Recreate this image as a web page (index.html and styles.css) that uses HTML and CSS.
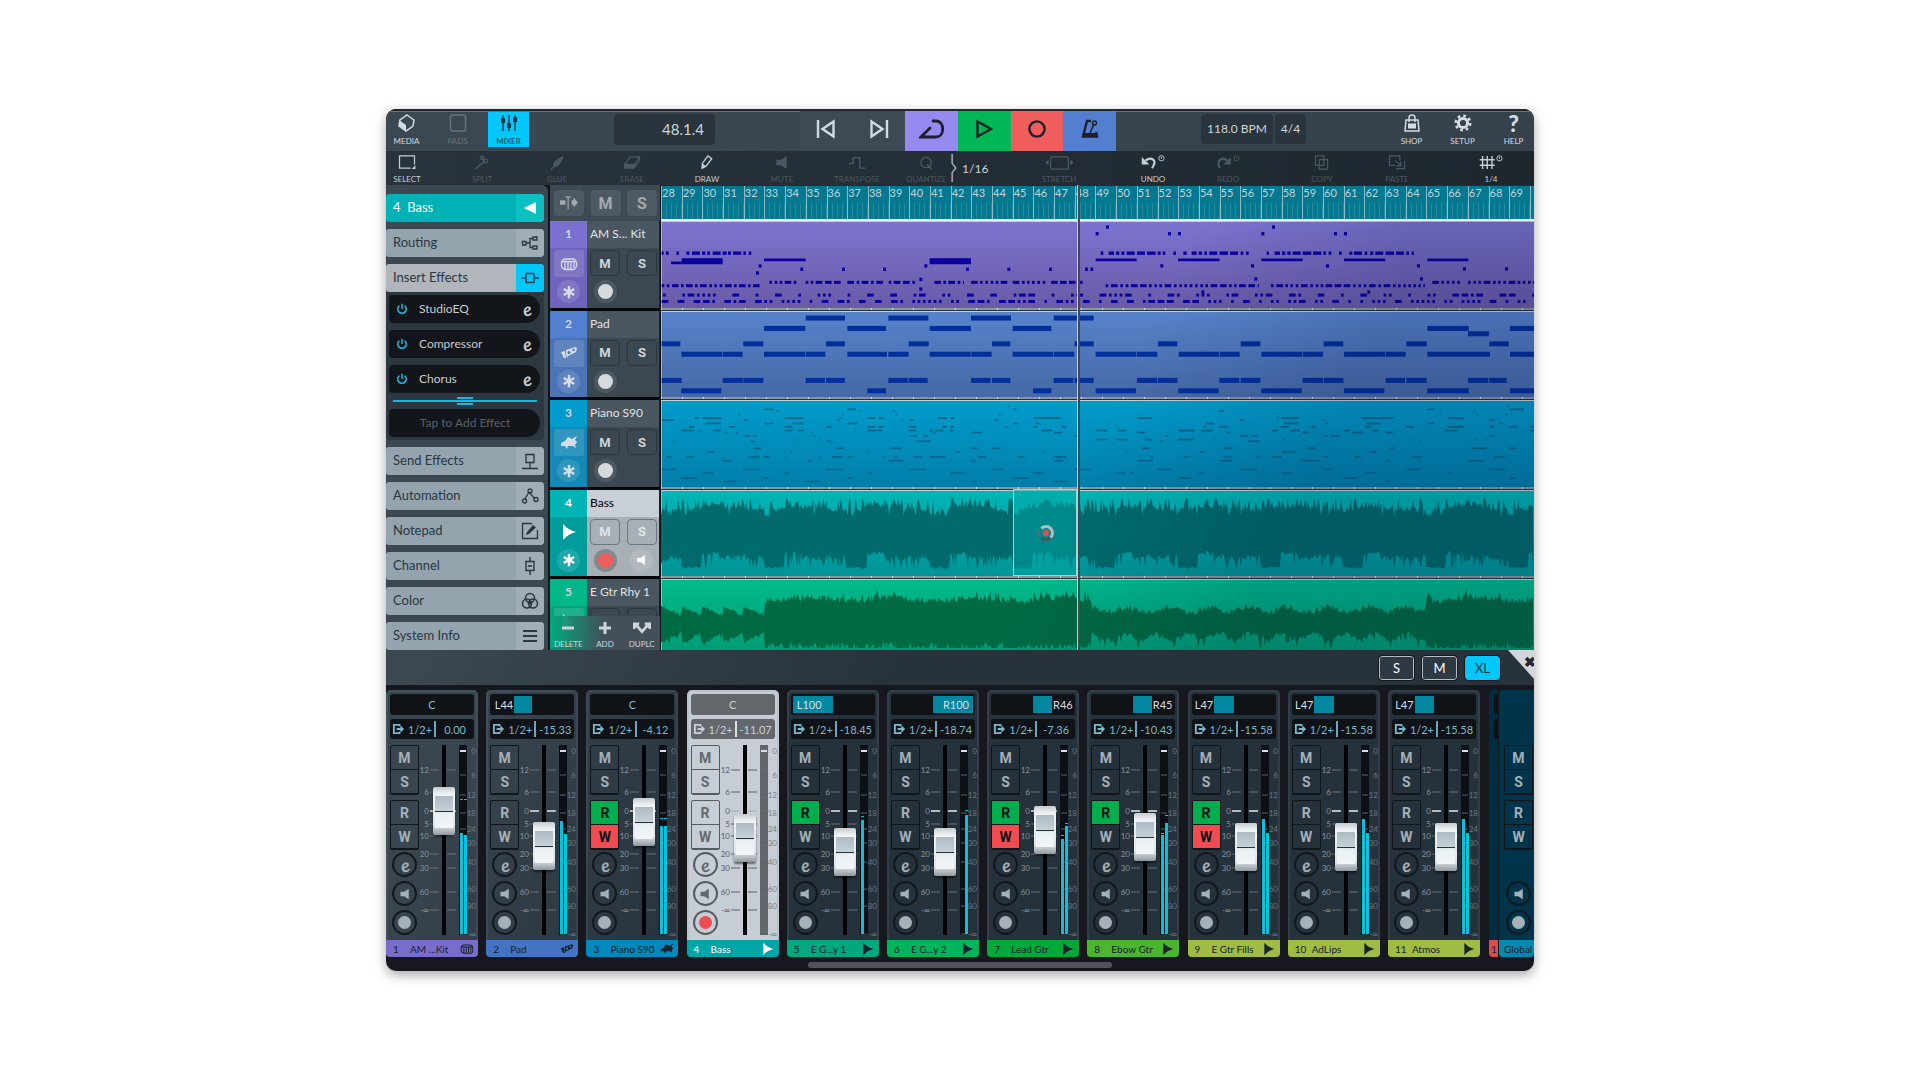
FILE: index.html
```html
<!DOCTYPE html>
<html lang="en">
<head>
  <meta charset="UTF-8" />
  <meta name="viewport" content="width=device-width, initial-scale=1.0" />
  <title>Project - Mixer</title>
  <link rel="stylesheet" href="styles.css">
</head>
<body>
  <!-- Icon sprite -->
  <svg class="sprite" aria-hidden="true">
    <symbol id="i-media" viewBox="0 0 18 18"><path d="M9 1 16 6 15 12 8 17 1 12 2 6Z" fill="none" stroke="currentColor" stroke-width="1.5"/><path d="M1 6 8 11V17L1 12Z" fill="currentColor"/></symbol>
    <symbol id="i-pads" viewBox="0 0 18 18"><rect x="1.5" y="1" width="15" height="16" rx="2" fill="none" stroke="currentColor" stroke-width="1.5"/></symbol>
    <symbol id="i-mixer" viewBox="0 0 18 18"><path d="M3 1V17M9 1V17M15 1V17" stroke="currentColor" stroke-width="1.4"/><path d="M1 4h4v5H1zM7 9h4v5H7zM13 3h4v5h-4z" fill="currentColor"/></symbol>
    <symbol id="i-prev" viewBox="0 0 20 20"><path d="M2 1V19M17.500 2.500V17.500L6.500 10Z" fill="none" stroke="currentColor" stroke-width="2.4"/></symbol>
    <symbol id="i-next" viewBox="0 0 20 20"><path d="M18 1V19M2.500 2.500V17.500L13.500 10Z" fill="none" stroke="currentColor" stroke-width="2.400"/></symbol>
    <symbol id="i-cycle" viewBox="0 0 26 20"><path d="M14 2H17C26 2 26 18 17 18H2L11 9" fill="none" stroke="currentColor" stroke-width="2.800" stroke-linecap="round"/></symbol>
    <symbol id="i-playline" viewBox="0 0 20 20"><path d="M3.500 2.500V17.500L17 10Z" fill="none" stroke="currentColor" stroke-width="2.400"/></symbol>
    <symbol id="i-rec" viewBox="0 0 20 20"><circle cx="10" cy="10" r="7.600" fill="none" stroke="currentColor" stroke-width="2.400"/></symbol>
    <symbol id="i-metro" viewBox="0 0 20 20"><path d="M11 2H7L3 17.500H17L16 13" fill="none" stroke="currentColor" stroke-width="2.400"/><path d="M4 14H17V18H3Z" fill="currentColor"/><path d="M10 14 14 5" stroke="currentColor" stroke-width="1.600"/><circle cx="14.500" cy="4" r="2" fill="none" stroke="currentColor" stroke-width="1.400"/></symbol>
    <symbol id="i-shop" viewBox="0 0 18 18"><path d="M3 6H15L16 17H2ZM6 8V4C6 0 12 0 12 4V8" fill="none" stroke="currentColor" stroke-width="1.500"/><path d="M5 9.500H13V14.500H5Z" fill="currentColor"/></symbol>
    <symbol id="i-setup" viewBox="0 0 18 18"><circle cx="9" cy="9" r="4.600" fill="none" stroke="currentColor" stroke-width="3"/><circle cx="9" cy="9" r="7.200" fill="none" stroke="currentColor" stroke-width="2.600" stroke-dasharray="2.800 2.855"/></symbol>
    <symbol id="i-select" viewBox="0 0 18 16"><path d="M13 14H1V1H17V10" fill="none" stroke="currentColor" stroke-width="1.300"/><path d="M18 11V15H14Z" fill="currentColor"/></symbol>
    <symbol id="i-split" viewBox="0 0 18 16"><path d="M2 15 11 7M9 2 12 8" stroke="currentColor" stroke-width="1.600"/><circle cx="9" cy="3" r="2" fill="none" stroke="currentColor" stroke-width="1.200"/><circle cx="13" cy="6.500" r="2.200" fill="none" stroke="currentColor" stroke-width="1.200"/></symbol>
    <symbol id="i-glue" viewBox="0 0 18 16"><path d="M2 15 5 12C3 8 10 3 16 1C15 6 11 13 6 13L3 16Z" fill="currentColor"/></symbol>
    <symbol id="i-erase" viewBox="0 0 18 16"><path d="M1 10 7 2H17L12 10ZM1 10V14H11L17 6V2M12 10 11 14" fill="none" stroke="currentColor" stroke-width="1.200"/><path d="M1 10H12L11 14H1Z" fill="currentColor"/></symbol>
    <symbol id="i-draw" viewBox="0 0 18 16"><path d="M4 14V9L10 1 14 4 8 12Z" fill="none" stroke="currentColor" stroke-width="1.500"/><path d="M4 9 8 12 3 15Z" fill="currentColor"/></symbol>
    <symbol id="i-speaker" viewBox="0 0 18 16"><path d="M3 5H8L14 1V15L8 11H3Z" fill="currentColor"/></symbol>
    <symbol id="i-transpose" viewBox="0 0 18 16"><path d="M0 9H5V3H12V14H18" fill="none" stroke="currentColor" stroke-width="1.500"/></symbol>
    <symbol id="i-quantize" viewBox="0 0 18 16"><path d="M9 2.500A5.500 5.500 0 1 0 9 13.500 5.500 5.500 0 1 0 9 2.500M10 10 15 15" fill="none" stroke="currentColor" stroke-width="1.500"/></symbol>
    <symbol id="i-stretch" viewBox="0 0 30 16"><rect x="6" y="2" width="19" height="13" rx="1" fill="none" stroke="currentColor" stroke-width="1.300"/><path d="M4 5V11L0 8ZM27 5V11L31 8Z" fill="currentColor"/></symbol>
    <symbol id="i-undo" viewBox="0 0 26 16"><path d="M5 6C10 2 19 4 12 14" fill="none" stroke="currentColor" stroke-width="2.400"/><path d="M1 2V10H9Z" fill="currentColor"/><circle cx="22" cy="3.500" r="2.800" fill="none" stroke="currentColor"/><path d="M22 2V4" stroke="currentColor"/></symbol>
    <symbol id="i-redo" viewBox="0 0 26 16"><path d="M12 6C8 2 0 4 4 14" fill="none" stroke="currentColor" stroke-width="2.400"/><path d="M16 2V10H8Z" fill="currentColor"/><circle cx="22" cy="3.500" r="2.800" fill="none" stroke="currentColor"/><path d="M22 2V4" stroke="currentColor"/></symbol>
    <symbol id="i-copy" viewBox="0 0 18 16"><path d="M2 1H11V11H2ZM6 5H15V15H6Z" fill="none" stroke="currentColor" stroke-width="1.300"/></symbol>
    <symbol id="i-paste" viewBox="0 0 18 16"><path d="M12 6V1H1V11H7M8 14.500H17V7M7 6 13 11M13 7V11.500H8" fill="none" stroke="currentColor" stroke-width="1.300"/></symbol>
    <symbol id="i-grid" viewBox="0 0 26 16"><path d="M4 1V15M9 1V15M14 1V15M1 5H17M1 11H17" stroke="currentColor" stroke-width="1.500"/><circle cx="22" cy="3.500" r="2.800" fill="none" stroke="currentColor"/><path d="M22 2V4" stroke="currentColor"/></symbol>
    <symbol id="i-tri-left" viewBox="0 0 18 18"><path d="M15 3V15L3 9Z" fill="currentColor"/></symbol>
    <symbol id="i-play" viewBox="0 0 18 18"><path d="M3 1V17Q8 11 16 9Q8 7 3 1Z" fill="currentColor"/></symbol>
    <symbol id="i-routing" viewBox="0 0 18 18"><path d="M1.500 7.500H5V11H1.500ZM12 3H16V6H12ZM12 12H16V15H12ZM5 9H9M12 4.500H9V13.500H12" fill="none" stroke="currentColor" stroke-width="1.300"/></symbol>
    <symbol id="i-insert" viewBox="0 0 18 18"><path d="M0 9H5M13 9H18M5 4.500H13V13.500H5Z" fill="none" stroke="currentColor" stroke-width="1.400"/></symbol>
    <symbol id="i-send" viewBox="0 0 18 18"><path d="M5 2.500H13V10.500H5ZM9 11V16M1 16.500H17" fill="none" stroke="currentColor" stroke-width="1.300"/></symbol>
    <symbol id="i-auto" viewBox="0 0 18 18"><path d="M4 12 8 5 14 12" fill="none" stroke="currentColor" stroke-width="1.300"/><g fill="none" stroke="currentColor" stroke-width="1.300"><circle cx="3.500" cy="14" r="2"/><circle cx="9" cy="4" r="2"/><circle cx="15" cy="12.500" r="2"/></g></symbol>
    <symbol id="i-note" viewBox="0 0 18 18"><path d="M11 1.500H1.500V16.500H16.500V8" fill="none" stroke="currentColor" stroke-width="1.300"/><path d="M5 13 6 10 12 3 15 5.500 8 12Z" fill="currentColor"/></symbol>
    <symbol id="i-channel" viewBox="0 0 18 18"><path d="M5 4.500H13V13.500H5ZM9 0V4M9 14V18M7 9H11" fill="none" stroke="currentColor" stroke-width="1.400"/></symbol>
    <symbol id="i-color" viewBox="0 0 18 18"><g fill="none" stroke="currentColor" stroke-width="1.500"><circle cx="9" cy="6" r="4.500"/><circle cx="6" cy="11.500" r="4.500"/><circle cx="12" cy="11.500" r="4.500"/></g><path d="M6 9H12L9 13Z" fill="currentColor"/></symbol>
    <symbol id="i-lines" viewBox="0 0 18 18"><path d="M2 4H16M2 9H16M2 14H16" stroke="currentColor" stroke-width="2"/></symbol>
    <symbol id="i-power" viewBox="0 0 14 14"><path d="M4 3A5 5 0 1 0 10 3M7 1V7" fill="none" stroke="currentColor" stroke-width="1.800"/></symbol>
    <symbol id="i-cursor" viewBox="0 0 20 16"><path d="M0 5H6V10H0ZM13 5H15V2L20 7.500 15 13V10H13Z" fill="currentColor"/><path d="M6 1.500H12M9 1V15" stroke="currentColor" stroke-width="1.200"/></symbol>
    <symbol id="i-drum" viewBox="0 0 18 18"><rect x="1.500" y="4" width="15" height="10.500" rx="4" fill="none" stroke="currentColor" stroke-width="1.300"/><path d="M2 6.500H16M5 7V14M8 7V14M11 7V14M14 7V13" stroke="currentColor" stroke-width="1.300"/></symbol>
    <symbol id="i-synth" viewBox="0 0 18 18"><path d="M1 8 5 7 6 14 4 14ZM6 6 15 3 17 4 16 8 8 12 7 14 6 10Z" fill="currentColor"/><circle cx="9" cy="8.500" r="1.500" fill="#47a"/><circle cx="13.500" cy="6" r="1.200" fill="#47a"/></symbol>
    <symbol id="i-piano" viewBox="0 0 18 18"><path d="M1 9 5 7 8 3 12 5 17 2 15 6 17 8 15 11 16 14 13 12 8 12 7 15 5 12 1 12Z" fill="currentColor"/></symbol>
    <symbol id="i-star" viewBox="0 0 16 16"><path d="M8 1V15M2 4.500 14 11.500M14 4.500 2 11.500" stroke="currentColor" stroke-width="2.800"/></symbol>
    <symbol id="i-minus" viewBox="0 0 14 14"><path d="M1 7H13" stroke="currentColor" stroke-width="3"/></symbol>
    <symbol id="i-plus" viewBox="0 0 14 14"><path d="M1 7H13M7 1V13" stroke="currentColor" stroke-width="3"/></symbol>
    <symbol id="i-dup" viewBox="0 0 20 14"><path d="M4 4 10 11 16 4" fill="none" stroke="currentColor" stroke-width="3"/><path d="M0 1H7V3L2 8H0ZM20 1H13V3L18 8H20Z" fill="currentColor"/></symbol>
    <symbol id="i-out" viewBox="0 0 14 12"><path d="M8 3V1.500H2V10.500H8V9" fill="none" stroke="currentColor" stroke-width="2"/><path d="M5 5H9V2L13 6 9 10V7H5Z" fill="currentColor"/></symbol>
  </svg>

  <main class="app">
    <header class="topbar">
      <nav class="group">
        <button class="menu-btn"><svg><use href="#i-media"/></svg>MEDIA</button>
        <button class="menu-btn off"><svg><use href="#i-pads"/></svg>PADS</button>
        <button class="menu-btn on"><svg><use href="#i-mixer"/></svg>MIXER</button>
      </nav>
      <div class="position">48.1.4</div>
      <div class="transport">
        <button aria-label="Previous"><svg><use href="#i-prev"/></svg></button>
        <button aria-label="Next"><svg><use href="#i-next"/></svg></button>
        <button class="cycle" aria-label="Cycle"><svg class="wide"><use href="#i-cycle"/></svg></button>
        <button class="play" aria-label="Play"><svg><use href="#i-playline"/></svg></button>
        <button class="record" aria-label="Record"><svg><use href="#i-rec"/></svg></button>
        <button class="metro" aria-label="Metronome"><svg><use href="#i-metro"/></svg></button>
      </div>
      <div class="tempo">
        <button class="bpm">118.0 BPM</button>
        <button class="sig">4/4</button>
      </div>
      <nav class="group">
        <button class="menu-btn"><svg><use href="#i-shop"/></svg>SHOP</button>
        <button class="menu-btn"><svg><use href="#i-setup"/></svg>SETUP</button>
        <button class="menu-btn"><b class="help">?</b>HELP</button>
      </nav>
    </header>

    <div class="tools">
      <div class="tool-group">
        <button class="tool active"><svg><use href="#i-select"/></svg>SELECT</button>
        <button class="tool"><svg><use href="#i-split"/></svg>SPLIT</button>
        <button class="tool"><svg><use href="#i-glue"/></svg>GLUE</button>
        <button class="tool"><svg><use href="#i-erase"/></svg>ERASE</button>
        <button class="tool active"><svg><use href="#i-draw"/></svg>DRAW</button>
        <button class="tool"><svg><use href="#i-speaker"/></svg>MUTE</button>
        <button class="tool"><svg><use href="#i-transpose"/></svg>TRANSPOSE</button>
      </div>
      <div class="quantize">
        <button class="tool"><svg><use href="#i-quantize"/></svg>QUANTIZE</button>
        <svg class="brace" viewBox="0 0 6 30"><path d="M1 0V10L5 15 1 20V30" fill="none" stroke="currentColor" stroke-width="1.500"/></svg>
        <span>1/16</span>
      </div>
      <div class="tool-group"><button class="tool"><svg class="wide"><use href="#i-stretch"/></svg>STRETCH</button></div>
      <div class="tool-group">
        <button class="tool active"><svg class="wide"><use href="#i-undo"/></svg>UNDO</button>
        <button class="tool"><svg class="wide"><use href="#i-redo"/></svg>REDO</button>
      </div>
      <div class="tool-group">
        <button class="tool"><svg><use href="#i-copy"/></svg>COPY</button>
        <button class="tool"><svg><use href="#i-paste"/></svg>PASTE</button>
      </div>
      <div class="tool-group"><button class="tool active"><svg class="wide"><use href="#i-grid"/></svg>1/4</button></div>
    </div>

    <section class="project">
      <aside class="inspector">
        <button class="panel track-title"><span>4&nbsp; Bass</span><i><svg><use href="#i-tri-left"/></svg></i></button>
        <button class="panel"><span>Routing</span><i><svg><use href="#i-routing"/></svg></i></button>
        <button class="panel open"><span>Insert Effects</span><i><svg><use href="#i-insert"/></svg></i></button>
        <div class="inserts">
          <button class="insert"><svg><use href="#i-power"/></svg><span>StudioEQ</span><em class="e">e</em></button>
          <button class="insert"><svg><use href="#i-power"/></svg><span>Compressor</span><em class="e">e</em></button>
          <button class="insert"><svg><use href="#i-power"/></svg><span>Chorus</span><em class="e">e</em></button>
          <div class="divider"><b></b></div>
          <button class="insert add">Tap to Add Effect</button>
        </div>
        <button class="panel"><span>Send Effects</span><i><svg><use href="#i-send"/></svg></i></button>
        <button class="panel"><span>Automation</span><i><svg><use href="#i-auto"/></svg></i></button>
        <button class="panel"><span>Notepad</span><i><svg><use href="#i-note"/></svg></i></button>
        <button class="panel"><span>Channel</span><i><svg><use href="#i-channel"/></svg></i></button>
        <button class="panel"><span>Color</span><i><svg><use href="#i-color"/></svg></i></button>
        <button class="panel"><span>System Info</span><i><svg><use href="#i-lines"/></svg></i></button>
      </aside>

      <div class="tracks">
        <div class="track-head">
          <button aria-label="Cursor mode"><svg><use href="#i-cursor"/></svg></button>
          <button>M</button>
          <button>S</button>
        </div>
        <div class="rows" id="trackRows"></div>
        <div class="track-actions">
          <button><svg><use href="#i-minus"/></svg>DELETE</button>
          <button><svg><use href="#i-plus"/></svg>ADD</button>
          <button><svg><use href="#i-dup"/></svg>DUPLC</button>
        </div>
      </div>

      <div class="arrange">
        <div class="ruler" id="ruler"></div>
        <div class="rows" id="lanes"></div>
        <div class="shade"></div>
        <div class="clip-new"><span class="touch"></span></div>
        <div class="playhead"></div>
      </div>
    </section>

    <div class="mixer-bar">
      <button>S</button>
      <button>M</button>
      <button class="on">XL</button>
      <div class="corner"><b>✖</b></div>
    </div>

    <section class="mixer">
      <div class="mixer-row">
        <div class="strips" id="strips"></div>
        <div class="sliver">
          <div class="sliver-body"><b></b><b></b></div>
          <div class="strip-name">1</div>
        </div>
        <div class="global">
          <div class="keys"><button>M</button><button>S</button></div>
          <div class="keys"><button>R</button><button>W</button></div>
          <div class="rounds">
            <button class="round" aria-label="Monitor"><svg><use href="#i-speaker"/></svg></button>
            <button class="round" aria-label="Record enable"><span class="dot"></span></button>
          </div>
          <div class="strip-name">Global</div>
        </div>
      </div>
      <div class="home"></div>
    </section>
  </main>
  <script src="script.js"></script>
</body>
</html>
```
FILE: styles.css
```css
* {
  box-sizing: border-box;
}

body {
  margin: 0;
  min-height: 100vh;
  padding: 109px 386px;
  background: white;
  font-family: Lato, "Open Sans", sans-serif;
  font-size: 12px;
  color: #cdd5db;
}

button {
  margin: 0;
  padding: 0;
  border: none;
  background: none;
  color: inherit;
  font: inherit;
}

svg {
  display: block;
  width: 18px;
  height: 18px;
  overflow: visible;
}

.sprite {
  position: absolute;
  width: 0;
  height: 0;
}

.app {
  border-radius: 10px;
  overflow: hidden;
  background: #17181d;
  box-shadow: 0 4px 12px rgba(0, 0, 0, 0.35);
}

/* top bar */
.topbar {
  display: flex;
  justify-content: space-between;
  height: 42px;
  border-top: 2px solid #25282c;
  background: linear-gradient(90deg, #3b4852, #35424c);
  box-shadow: inset 0 1px #68727a;
}

.group {
  display: flex;
  gap: 10px;
  padding-top: 1px;
}

.menu-btn {
  display: flex;
  flex-direction: column;
  align-items: center;
  justify-content: space-between;
  width: 41px;
  height: 35px;
  padding: 2px 0 1px;
  font-size: 8px;
  line-height: 10px;
  color: #d3dce2;
}

.menu-btn.off {
  color: #66727b;
}

.menu-btn.on {
  background: #00c8fc;
  color: #10394a;
}

.help {
  font-size: 23px;
  line-height: 19px;
  font-weight: 900;
}

.position {
  width: 101px;
  height: 31px;
  margin-top: 3px;
  padding-right: 11px;
  border-radius: 4px;
  background: #29343d;
  font-size: 15px;
  line-height: 31px;
  text-align: right;
}

.transport {
  display: flex;
  width: 316px;
  color: #ccdde3;
}

.transport button {
  display: flex;
  flex: 1;
  align-items: center;
  justify-content: center;
  padding-bottom: 4px;
  background: #3b4a54;
}

.transport svg {
  width: 20px;
  height: 20px;
}

.transport .wide {
  width: 26px;
}

.transport .cycle { background: #9689f0; color: #1d1f2a; }
.transport .play { background: #00b758; color: #1d1f2a; }
.transport .record { background: #f05d5d; color: #1d1f2a; }
.transport .metro { background: #527fcf; color: #1d1f2a; }

.tempo {
  display: flex;
  gap: 2px;
  padding-top: 3px;
}

.tempo button {
  height: 30px;
  padding-bottom: 2px;
  border-radius: 4px;
  background: #29343d;
  font-size: 12px;
}

.bpm {
  width: 72px;
}

.sig {
  width: 31px;
}

/* tools */
.tools {
  display: flex;
  height: 34px;
  padding-right: 22px;
  background: linear-gradient(90deg, #28333c, #1e272e);
}

.tool-group {
  display: flex;
  gap: 33px;
  margin-left: auto;
}

.tool-group:first-child {
  margin-left: 0;
}

.tool {
  display: flex;
  flex-direction: column;
  align-items: center;
  gap: 4px;
  width: 42px;
  padding-top: 4px;
  font-size: 8px;
  line-height: 10px;
  color: #4c5861;
}

.tool.active {
  color: #c3ced5;
}

.tool svg {
  height: 15px;
}

.tool .wide {
  width: 28px;
}

.quantize {
  display: flex;
  align-items: center;
  gap: 5px;
  width: 80px;
  margin-left: 28px;
}

.quantize .tool {
  align-self: stretch;
}

.quantize .brace {
  flex: none;
  width: 6px;
  height: 28px;
  color: #aab4bb;
}

/* project */
.project {
  display: flex;
  height: 465px;
  background: #10151a;
}

.inspector {
  display: flex;
  flex-direction: column;
  align-items: flex-start;
  gap: 7px;
  width: 162px;
  margin-right: 2px;
  padding: 9px 0 0;
  overflow: hidden;
  border-radius: 0 6px 0 0;
  background: #3b4751;
}

.panel {
  display: flex;
  flex: none;
  width: 158px;
  height: 28px;
  overflow: hidden;
  border-radius: 3px 4px 4px 3px;
  background: #94a4ae;
  color: #2b363f;
  font-size: 13px;
  line-height: 27px;
  text-align: left;
}

.panel span {
  flex: 1;
  padding-left: 7px;
}

.panel i {
  display: flex;
  align-items: center;
  justify-content: center;
  width: 28px;
  background: #9eadb6;
}

.track-title {
  background: #00b1b5;
  color: white;
}

.track-title i {
  background: #0cbfc0;
}

.panel.open {
  background: #b0b6bb;
}

.panel.open i {
  background: #00c8fc;
}

.inserts {
  width: 158px;
  margin-top: -7px;
  padding: 3px 4px 3px 3px;
  border-radius: 0 0 4px 4px;
  background: #2c3740;
}

.insert {
  display: flex;
  align-items: center;
  width: 151px;
  height: 28px;
  margin-bottom: 7px;
  padding: 0 6px 0 7px;
  border-radius: 4px 14px 14px 4px;
  background: #121519;
  color: #c6ccd1;
  font-size: 12px;
  line-height: 26px;
}

.insert svg {
  width: 12px;
  height: 12px;
  color: #16b8e0;
}

.insert span {
  flex: 1;
  padding-left: 11px;
  text-align: left;
}

.e {
  width: 14px;
  font-size: 18px;
  font-weight: bold;
  line-height: 14px;
  text-align: center;
  transform: rotate(-15deg);
}

.insert.add {
  justify-content: center;
  margin: 0;
  color: #596168;
}

.divider {
  width: 144px;
  height: 2px;
  margin: 7px 4px;
  background: #16b8e0;
}

.divider b {
  display: block;
  position: relative;
  top: -3px;
  width: 16px;
  height: 8px;
  margin: auto;
  border: solid #16b8e0;
  border-width: 2px 0;
}

.rows {
  display: grid;
  flex: 1;
  grid-template-rows: repeat(4, 1fr) 71px;
  min-height: 0;
}

/* track list */
.tracks {
  display: flex;
  flex-direction: column;
  position: relative;
  width: 110px;
}

.track-head {
  display: flex;
  justify-content: space-between;
  height: 36px;
  padding: 5px 3px 5px 4px;
  background: #3d4953;
  color: #a3abb0;
}

.track-head button {
  display: flex;
  align-items: center;
  justify-content: center;
  width: 30px;
  border-radius: 4px;
  background: #4e5a63;
  font: bold 16px "Liberation Sans Narrow", "Roboto", sans-serif;
}

.track {
  display: flex;
  overflow: hidden;
  border-bottom: 3px solid #05070a;
}

.track-color {
  width: 37px;
  font-weight: bold;
  text-align: center;
  line-height: 25px;
}

.track-color svg {
  width: 18px;
  height: 18px;
  color: #d5dee6;
}

.cell {
  display: flex;
  align-items: center;
  justify-content: center;
  width: 30px;
  height: 27px;
  margin: 4px 4px 3px;
  border-radius: 3px;
  background: rgba(255, 255, 255, 0.12);
}

.cell.star {
  width: 23px;
  height: 23px;
  margin: 0 7px;
  border-radius: 50%;
}

.track-color .star svg {
  width: 14px;
  height: 14px;
}

.track-info {
  flex: 1;
  background: #3b4851;
  border-right: 1px solid #1a2127;
}

.track-name {
  height: 27px;
  padding-left: 3px;
  background: #4a5660;
  color: #e0e4e8;
  line-height: 25px;
  white-space: nowrap;
}

.track-btns {
  display: flex;
  gap: 7px;
  padding: 2px 0 4px 3px;
}

.track-btns button {
  width: 30px;
  height: 26px;
  border: 1px solid #2c363e;
  border-radius: 4px;
  font: bold 13px "Liberation Sans Narrow", "Roboto", sans-serif;
}

.track-recs {
  display: flex;
  gap: 13px;
  padding-left: 7px;
}

.track-rec {
  display: flex;
  align-items: center;
  justify-content: center;
  width: 23px;
  height: 23px;
  border-radius: 50%;
  background: #4c5862;
}

.dot {
  width: 15px;
  height: 15px;
  border-radius: 50%;
  background: #d5dade;
}

.track.selected .track-info { background: #a9b0b5; }
.track.selected .track-name { background: #c8cfd6; color: black; }
.track.selected .track-btns button { border-color: #6b767e; color: #dfe4e8; }
.track.selected .track-rec { background: #84898d; }
.track.selected .monitor { background: #b2b8bd; color: white; }
.track.selected .dot { background: #f05d5d; }
.track.selected .track-color, .track.selected .track-color svg { color: white; }
.monitor svg { width: 13px; height: 14px; }

.track-actions {
  display: flex;
  position: absolute;
  right: 0;
  bottom: 0;
  left: 0;
  height: 34px;
  background: linear-gradient(90deg, rgba(0, 170, 125, 0.9), #43505a 50%);
}

.track-actions button {
  display: flex;
  flex: 1;
  flex-direction: column;
  align-items: center;
  gap: 4px;
  padding-top: 5px;
  font-size: 8px;
  line-height: 10px;
}

.track-actions svg {
  height: 14px;
}

/* arrangement */
.arrange {
  display: flex;
  flex: 1;
  flex-direction: column;
  position: relative;
  min-width: 0;
  margin-left: 1px;
  overflow: hidden;
}

.ruler {
  display: flex;
  height: 36px;
  border-top: 1px solid #12333d;
  border-bottom: 2px solid #e9f2f6;
  overflow: hidden;
  background: #037991;
}

.bar {
  flex: 0 0 calc(100% / 42.17);
  border-left: 1px solid #8dbcc8;
  background: repeating-linear-gradient(90deg, transparent 0 4px, #2a889c 4px 5px) 0 100% / 100% 16px no-repeat;
  color: #c3d3d8;
  font-size: 11px;
  line-height: 14px;
}

.lane {
  min-height: 0;
  overflow: hidden;
  border-bottom: 1px solid #27333b;
  box-shadow: inset 0 1px #b9d3dd, inset 1px 0 #9fb6c4;
}

.lane::after {
  content: "";
  display: block;
  height: 2px;
  background: repeating-linear-gradient(90deg, #d4d9dd 0 1px, #8b959c 1px 21px);
}

.lane svg {
  width: 100%;
  height: calc(100% - 2px);
}

.lane.clips-1 { background: linear-gradient(#7c74d0, #685aa6); }
.lane.clips-2 { background: linear-gradient(#5783cb, #4668a5); }
.lane.clips-3 { background: linear-gradient(#029dcc, #017da9); }
.lane.clips-4 { background: linear-gradient(#00b6b6, #009396); }
.lane.clips-5 { background: linear-gradient(#00bb8d, #009c75); border: none; }

.clips-5::after {
  display: none;
}

.shade {
  position: absolute;
  inset: 36px 0 0;
  background: linear-gradient(115deg, transparent 50%, rgba(0, 15, 60, 0.16) 72%);
}

.clip-new {
  display: flex;
  align-items: center;
  position: absolute;
  top: 304px;
  left: 40.3%;
  width: 7.4%;
  height: 87px;
  padding-left: 24px;
  border: 1px solid #9ad5d5;
  background: rgba(0, 168, 168, 0.5);
}

.touch {
  width: 16px;
  height: 16px;
  border: 3px solid #b3bcc0;
  border-left-color: transparent;
  border-bottom-color: #3c5a5e;
  border-radius: 50%;
  background: radial-gradient(circle, #f04b4b 2px, transparent 4px);
}

.playhead {
  position: absolute;
  top: 0;
  bottom: 0;
  left: 47.7%;
  width: 3px;
  border-left: 1px solid #c5ced3;
  background: #45474d;
}

/* mixer */
.mixer-bar {
  display: flex;
  gap: 8px;
  justify-content: flex-end;
  height: 35px;
  padding-top: 6px;
  background: linear-gradient(115deg, #3b4751 30%, #28323a 50%) fixed;
}

.mixer-bar button {
  width: 35px;
  height: 24px;
  border: 1px solid #b8bfc4;
  border-radius: 3px;
  outline: 1px solid #15191d;
  background: #2e3943;
  font-size: 13px;
  line-height: 20px;
  color: white;
}

.mixer-bar .on {
  border-color: #00c8fc;
  background: #00c8fc;
  color: #10394a;
}

.corner {
  width: 26px;
  height: 29px;
  margin-top: -6px;
  overflow: hidden;
  clip-path: polygon(0 0, 100% 0, 100% 100%);
  background: #d2d7dc;
  color: #22282e;
  text-indent: 16px;
  font-size: 14px;
  line-height: 24px;
}

.mixer {
  height: 286px;
  padding-top: 5px;
}

.mixer-row {
  display: flex;
  height: 267px;
}

.strips {
  display: flex;
  flex: 1;
  justify-content: space-between;
}

.strip {
  width: 92px;
  border-radius: 5px;
  padding: 4px 4px 0;
  background: linear-gradient(115deg, #394650 33%, #25313b 47%) fixed;
  box-shadow: inset 0 0 0 2px rgba(130, 150, 165, 0.15);
}

.pan,
.route {
  display: flex;
  align-items: center;
  height: 21px;
  border-radius: 3px;
  background: #0f1216;
  color: #7cb8ca;
  font-size: 11px;
}

.pan {
  justify-content: center;
  padding: 0 1px;
}

.half {
  display: flex;
  flex: 1;
  align-items: center;
  color: #d8dfe4;
}

.left { justify-content: flex-end; }
.pan-fill {
  height: 17px;
  margin: 0 1px;
  background: #0188a0;
  line-height: 17px;
}

.left .pan-fill { margin-right: 0; padding-left: 4px; }
.right .pan-fill { margin-left: 0; padding-right: 4px; text-align: right; }

.route {
  height: 20px;
  margin-top: 4px;
}

.route svg {
  width: 13px;
  height: 12px;
  margin: 0 3px 0 2px;
}

.route b {
  width: 2px;
  height: 16px;
  margin-left: 2px;
  background: #6ea5bd;
}

.route output {
  flex: 1;
  text-align: center;
}

.strip-main {
  display: flex;
  height: 201px;
  padding-top: 6px;
}

.controls {
  width: 29px;
}

.keys {
  width: 29px;
  height: 50px;
  margin-bottom: 5px;
  border: 1px solid #11161a;
  border-radius: 2px;
}

.keys button {
  display: block;
  width: 27px;
  height: 24px;
  border-bottom: 1px solid #11161a;
  color: #a5b0b7;
  font: bold 14px "Liberation Sans Narrow", "Roboto", sans-serif;
}

.keys .read { background: #00ae4c; color: #0e1417; }
.keys .write { background: #f04b50; color: #0e1417; }

.rounds {
  display: flex;
  flex-direction: column;
  gap: 4px;
  align-items: center;
  margin-top: -3px;
}

.round {
  display: flex;
  align-items: center;
  justify-content: center;
  width: 25px;
  height: 25px;
  border: 2px solid #14181c;
  border-radius: 50%;
  color: #a5b0b7;
}

.round svg { width: 14px; height: 12px; }
.round .dot { width: 13px; height: 13px; background: #a5b0b7; }

.fader {
  position: relative;
  width: 55px;
}

.fader svg {
  width: 55px;
  height: 190px;
  font-size: 8px;
  fill: #87939b;
}

.fader input {
  appearance: none;
  position: absolute;
  top: 0;
  left: 13px;
  width: 24px;
  height: 190px;
  margin: 0;
  background: none;
  writing-mode: vertical-lr;
  direction: rtl;
}

.fader input::-webkit-slider-thumb {
  appearance: none;
  width: 22px;
  height: 48px;
  border-radius: 2px;
  background:
    linear-gradient(#2a3238, #2a3238) center 24px / 18px 1px no-repeat,
    linear-gradient(#aebbc4 0, #c6d2da 50%, #e8eff3 52%, #f2f6f8 100%) center 9px / 18px 32px no-repeat,
    linear-gradient(#c4ccd1, #f0f3f5 15%, #dfe5e9 80%, #8f989e);
  box-shadow: 0 2px 2px rgba(0, 0, 0, 0.5);
}

.strip-name {
  display: flex;
  align-items: center;
  height: 17px;
  margin: 0 -4px;
  padding: 0 4px 0 7px;
  border-radius: 0 0 4px 4px;
  color: #16242c;
  font-size: 10px;
  line-height: 16px;
}

.strip-name b { width: 17px; font-weight: normal; }
.strip-name span { flex: 1; white-space: nowrap; }
.strip-name svg { width: 14px; height: 14px; }

.strip.selected {
  background: #c6cdd4;
}

.selected .pan, .selected .route { background: #64686c; color: #c7d0d6; }
.selected .route b { background: #dbe1e5; }
.selected .keys, .selected .keys button, .selected .round { border-color: #555c61; color: #62696e; }
.selected .round .dot { background: #f04b50; }
.selected .fader svg { fill: #5a6268; }
.selected .strip-name { color: white; }

.sliver {
  width: 9px;
  margin-left: 9px;
  overflow: hidden;
  border-radius: 4px 0 0 4px;
  background: #002c44;
}

.sliver-body {
  height: 250px;
  padding: 4px 0 0 5px;
}

.sliver-body b {
  display: block;
  height: 20px;
  margin-bottom: 5px;
  border-radius: 3px 0 0 3px;
  background: #0b1117;
}

.sliver .strip-name {
  padding-left: 6px;
  background: #dc4a50;
}

.global {
  width: 35px;
  margin-left: 1px;
  padding: 55px 0 0 5px;
  border-radius: 4px 0 0 0;
  background: #00344a;
}

.global .keys {
  margin-top: 0;
}

.global .rounds {
  width: 29px;
  height: 85px;
  padding-top: 29px;
}

.global .strip-name {
  margin: 3px 0 0 -5px;
  padding-left: 5px;
  background: #0089b1;
}

.home {
  width: 304px;
  height: 6px;
  margin: 5px auto 0;
  border-radius: 3px;
  background: #525358;
}
```
FILE: script.js
```js
const icon = name => `<svg><use href="#i-${name}"/></svg>`;

// ---- ruler ----
let bars = "";
for (let n = 28; n <= 70; n++) bars += `<div class="bar">${n < 70 ? n : ""}</div>`;
document.getElementById("ruler").innerHTML = bars;

// ---- track list ----
const tracks = [
  { name: "AM S... Kit", top: "#7a70d0", low: "#6f64bd", icon: "drum" },
  { name: "Pad", top: "#527fcf", low: "#4b73b8", icon: "synth" },
  { name: "Piano S90", top: "#009bcd", low: "#1488b6", icon: "piano" },
  { name: "Bass", top: "#00b4b4", low: "#009c9c", icon: "play", selected: true },
  { name: "E Gtr Rhy 1", top: "#00b78a", low: "#00a57c", icon: "play" }
];

document.getElementById("trackRows").innerHTML = tracks.map((t, i) => `
  <div class="track${t.selected ? " selected" : ""}">
    <div class="track-color" style="background:linear-gradient(${t.top} 27px, ${t.low} 27px)">${i + 1}
      <div class="cell"${t.selected ? ' style="background:none"' : ""}>${icon(t.icon)}</div>
      <div class="cell star">${icon("star")}</div>
    </div>
    <div class="track-info">
      <div class="track-name">${t.name}</div>
      <div class="track-btns"><button>M</button><button>S</button></div>
      <div class="track-recs">
        <button class="track-rec" aria-label="Record enable"><span class="dot"></span></button>
        ${t.selected ? `<button class="track-rec monitor" aria-label="Monitor">${icon("speaker")}</button>` : ""}
      </div>
    </div>
  </div>`).join("");

// ---- clips ----
let seed = 7;
function rnd() {
  seed = (seed * 16807) % 2147483647;
  return seed / 2147483647;
}

const rect = (x1, x2, y, h) => `<rect x="${x1}" y="${y - h / 2}" width="${x2 - x1}" height="${h}"/>`;
const svg = (fill, body) => `<svg viewBox="0 0 2619 258" preserveAspectRatio="none" fill="${fill}">${body}</svg>`;

// rows are { y: [start, end, start, end, ...] }
function notes(rows, h) {
  let out = "";
  for (const y in rows) {
    for (let i = 0; i < rows[y].length; i += 2) out += rect(rows[y][i], rows[y][i + 1], +y, h);
  }
  return out;
}

function hits(y, from, to, gap) {
  let out = "";
  for (let x = from; x < to;) {
    const w = rnd() > 0.7 ? 20 : 8;
    out += rect(x, Math.min(x + w, to), y, 9);
    x += w + (rnd() > 0.5 ? gap : 8);
  }
  return out;
}

function drums() {
  let out = notes({
    96: [2, 8, 15, 23, 46, 54, 76, 85, 93, 117, 123, 133, 139, 147, 155, 179, 185, 197, 201, 210, 216, 241, 247, 255, 263, 271,
      1319, 1327, 1343, 1359, 1365, 1375, 1381, 1390, 1397, 1421, 1428, 1452, 1458, 1484, 1490, 1499, 1505, 1513, 1537, 1545,
      1567, 1577, 1592, 1607, 1613, 1623, 1630, 1638, 1645, 1669, 1676, 1701, 1707, 1731, 1739, 1747, 1755, 1763,
      1817, 1824, 1841, 1857, 1863, 1873, 1879, 1889, 1895, 1919, 1925, 1951, 1956, 1981, 1987, 1995, 2003, 2011, 2034, 2042,
      2065, 2074, 2079, 2103, 2111, 2119, 2127, 2137, 2143, 2167, 2174, 2199, 2205, 2229, 2236, 2244, 2252, 2259]
  }, 10);
  out += notes({ 116: [309, 434, 1304, 1427, 1551, 1676, 1801, 1925, 2049, 2173, 2299, 2422], 125: [30, 62] }, 8);
  out += notes({ 120: [62, 185, 806, 930] }, 18);
  const dots = [[285, 155], [293, 134], [418, 144], [543, 144], [666, 144], [790, 134], [775, 174], [775, 203], [915, 144],
    [1039, 144], [1164, 144], [1272, 144], [1288, 144], [1304, 38], [1335, 18], [1521, 38], [1551, 38], [1498, 134], [1770, 134],
    [1780, 173], [1801, 38], [1833, 18], [2019, 38], [2049, 38], [1995, 134], [2268, 134], [2277, 173], [1621, 212], [2119, 212],
    [2406, 143], [2532, 143]];
  dots.forEach(d => out += rect(d[0], d[0] + 9, d[1], 10));
  out += hits(193, 2, 302, 7) + hits(193, 1334, 1794, 7) + hits(193, 1830, 2292, 7);
  [[325, 410], [434, 544], [559, 667], [683, 770], [820, 909], [930, 1042], [1055, 1157], [1170, 1265], [2314, 2400], [2421, 2619]]
    .forEach(r => out += hits(183, r[0], r[1], 7));
  return out + hits(221, 6, 2619, 50) + hits(240, 2, 2619, 28);
}

const pads = {
  21: [434, 552, 682, 802, 930, 1050, 1178, 1298],
  52: [309, 433, 559, 675, 806, 930, 1055, 1171, 2299, 2423, 2547, 2619],
  68: [2421, 2484],
  98: [2, 58, 247, 307, 495, 552, 743, 803, 993, 1048, 1241, 1298, 1491, 1549, 1739, 1798, 1988, 2047, 2236, 2297, 2485, 2543],
  129: [61, 183, 185, 245, 309, 432, 434, 493, 559, 678, 682, 743, 806, 929, 931, 992, 1055, 1177, 1179, 1240, 1304, 1425, 1427, 1489,
    1553, 1674, 1676, 1736, 1801, 1924, 1926, 1986, 2049, 2172, 2174, 2234, 2299, 2487, 2547, 2619],
  207: [2, 62, 185, 245, 247, 307, 434, 492, 495, 552, 682, 740, 743, 800, 930, 989, 993, 1048, 1178, 1237, 1241, 1298,
    1428, 1489, 1491, 1549, 1675, 1735, 1739, 1798, 1925, 1986, 1988, 2047, 2174, 2232, 2236, 2297, 2421, 2482, 2485, 2537],
  238: [61, 181, 619, 675, 1116, 1171, 1304, 1425, 1552, 1673, 1801, 1922, 2049, 2170, 2299, 2423, 2547, 2619]
};

const piano = {
  18: [1040, 1045, 2540, 2544],
  28: [309, 339, 559, 585, 1056, 1067, 2299, 2321, 2545, 2589],
  33: [347, 353, 597, 601, 696, 702, 1675, 1689, 2336, 2340, 2440, 2444],
  43: [232, 237, 542, 546, 704, 709, 1014, 1019, 2446, 2450, 2534, 2538],
  54: [101, 115, 124, 181, 371, 427, 536, 542, 619, 642, 653, 670, 830, 860, 868, 879, 1116, 1199, 1428, 1473, 1848, 1852, 1861, 1912,
    2103, 2197, 2360, 2408],
  60: [3, 39, 248, 260, 529, 536, 720, 724, 744, 759, 1000, 1012, 1737, 1751, 1985, 1990, 2485, 2501],
  70: [132, 180, 309, 337, 394, 428, 559, 589, 1056, 1073, 1124, 1134, 1635, 1659, 1869, 1912, 1994, 2000, 2117, 2157, 2299, 2319, 2516, 2524],
  80: [84, 101, 202, 222, 371, 394, 495, 512, 620, 642, 652, 667, 744, 764, 843, 858, 868, 879, 1032, 1038, 1116, 1130, 1202, 1217,
    1367, 1371, 1626, 1637, 1675, 1701, 1860, 1883, 1950, 1964, 2111, 2129, 2236, 2257, 2360, 2410, 2485, 2499, 2547, 2567, 2608, 2619],
  91: [61, 99, 114, 121, 155, 179, 371, 395, 410, 430, 582, 585, 620, 647, 651, 664, 744, 767, 806, 815, 822, 847, 865, 877, 1140, 1173,
    1304, 1339, 1372, 1396, 1551, 1602, 1620, 1655, 1833, 1850, 1887, 1917, 2049, 2067, 2134, 2152, 2352, 2388, 2608, 2619],
  97: [193, 200, 224, 230, 450, 454, 815, 822, 930, 962, 1178, 1204, 1428, 1453, 1698, 1708, 1925, 1944, 2072, 2105, 2174, 2195],
  107: [248, 269, 278, 287, 456, 463, 744, 769, 787, 800, 1240, 1257, 1512, 1522, 1737, 1761, 1771, 1789, 1988, 2001, 2011, 2035, 2485, 2500],
  118: [405, 409, 474, 479, 1304, 1339, 1367, 1399, 1451, 1473, 1551, 1600, 1660, 1664, 1866, 1872, 2262, 2266, 2440, 2447, 2472, 2476],
  123: [37, 42, 270, 281, 495, 511, 767, 809, 1496, 1506, 1761, 1796, 2276, 2280],
  144: [278, 300, 527, 549, 690, 721, 930, 948, 993, 1019, 1444, 1467, 1690, 1715, 1939, 1962, 2187, 2199, 2430, 2477, 2547, 2562],
  155: [140, 160, 387, 393, 617, 621, 883, 897, 1148, 1154, 1367, 1371, 1395, 1399, 1615, 1630, 1863, 1902, 2125, 2147],
  170: [15, 30, 76, 98, 263, 297, 309, 327, 371, 375, 472, 477, 513, 545, 559, 575, 669, 673, 700, 712, 759, 785, 806, 853, 950, 974,
    1071, 1092, 1180, 1217, 1287, 1291, 1469, 1477, 1567, 1589, 1691, 1712, 1785, 1797, 1832, 1862, 1987, 2000, 2079, 2099, 2252, 2284, 2500, 2532],
  181: [185, 210, 441, 453, 682, 727, 930, 944, 1178, 1206, 1428, 1474, 1675, 1713, 1925, 1979, 2174, 2187, 2421, 2469],
  207: [3, 47, 247, 298, 495, 545, 744, 795, 993, 1029, 1241, 1290, 1490, 1532, 1737, 1788, 1987, 2017, 2236, 2281, 2485, 2533],
  218: [124, 158, 371, 385, 621, 633, 868, 912, 1116, 1147, 1367, 1395, 1405, 1418, 1612, 1627, 1863, 1897, 2112, 2144, 2359, 2375],
  233: [61, 108, 309, 324, 559, 573, 1056, 1104, 1551, 1589, 2049, 2087, 2547, 2563],
  243: [185, 225, 434, 480, 930, 948, 1178, 1217, 2176, 2184]
};

// audio: edge(x) gives the [upper, lower] limits of the dark shape
function wave(edge) {
  let up = "", down = "";
  for (let x = 0; x <= 2619; x += 4) {
    const [a, b] = edge(x);
    up += `L${x} ${a.toFixed(0)}`;
    down = `L${x} ${b.toFixed(0)}` + down;
  }
  return `<path d="M0 120${up}${down}Z"/>`;
}

function bassEdge(x) {
  const p = (x + 124) % 248;
  const busy = x > 1250 && x < 2290;
  // the dark body, dipping away from the top at the end of a phrase
  let a = busy ? 44 + rnd() * 18 + 6 * Math.sin(x / 39) : p > 125 ? 52 + rnd() * 12 : 34 + rnd() * 22;
  if (!busy && p > 185 && p < 205) a = 70 + rnd() * 8;
  if (rnd() > 0.72) a = 22 + rnd() * 16;
  if (rnd() > 0.95) a = 76;
  let b = p < 50 ? 182 + rnd() * 12 : p < 185 ? 192 + rnd() * 22 : 228 + rnd() * 8;
  if (rnd() > 0.8 && p < 185) b = 222 + rnd() * 12;
  return [a, b];
}

function guitarEdge(x) {
  const p = (x % 62) / 62;
  if (x < 309) return [78 + p * 26 + rnd() * 10, 186 - p * 30 + rnd() * 10 + (rnd() > 0.9 ? 12 : 0)];
  if (x < 1290 || x > 2293) return [50 + rnd() * 20 + 6 * Math.sin(x / 40) - (rnd() > 0.9 ? 18 : 0), rnd() > 0.6 ? 188 + rnd() * 18 : 207];
  return [82 + rnd() * 20 + 8 * Math.sin(x / 19), 164 + 10 * Math.sin(x / 15) + rnd() * 18 + (rnd() > 0.88 ? 22 : 0)];
}

const lanes = [
  svg("#0a009c", drums()),
  svg("#00309a", notes(pads, 15)),
  svg("#04648b", notes(piano, 5)),
  svg("#006a6c", wave(bassEdge)),
  `<svg style="height:100%" viewBox="0 0 2619 213" preserveAspectRatio="none" fill="#006a43">${wave(guitarEdge)}</svg>`
];
document.getElementById("lanes").innerHTML = lanes.map((l, i) => `<div class="lane clips-${i + 1}">${l}</div>`).join("");

// ---- mixer ----
// fader and meter values are pixels along the 190px scale
const channels = [
  { name: "AM ...Kit", color: "#7a6ccb", icon: "drum", pan: 0, db: "0.00", fader: 100, meter: [88, 90], peak: [54, 54] },
  { name: "Pad", color: "#4573c3", icon: "synth", pan: -44, db: "-15.33", fader: 65, meter: [76, 89] },
  { name: "Piano S90", color: "#0089bd", icon: "piano", pan: 0, db: "-4.12", fader: 89, meter: [81, 81], peak: [73, 73], read: 1, write: 1 },
  { name: "Bass", color: "#00a5a8", icon: "play", pan: 0, db: "-11.07", fader: 73, selected: true },
  { name: "E G...y 1", color: "#00a880", icon: "play", pan: -100, db: "-18.45", fader: 59, meter: [75, 0], peak: [71, 0], read: 1 },
  { name: "E G...y 2", color: "#00b55c", icon: "play", pan: 100, db: "-18.74", fader: 59, meter: [0, 70], peak: [0, 65] },
  { name: "Lead Gtr", color: "#00a93a", icon: "play", pan: 46, db: "-7.36", fader: 81, meter: [94, 81], peak: [90, 78], read: 1, write: 1 },
  { name: "Ebow Gtr", color: "#4bb52f", icon: "play", pan: 45, db: "-10.43", fader: 74, meter: [90, 78], peak: [88, 70], read: 1 },
  { name: "E Gtr Fills", color: "#a0bc43", icon: "play", pan: -47, db: "-15.58", fader: 64, meter: [74, 88], read: 1, write: 1 },
  { name: "AdLips", color: "#a0bc43", icon: "play", pan: -47, db: "-15.58", fader: 64, meter: [74, 88] },
  { name: "Atmos", color: "#a0bc43", icon: "play", pan: -47, db: "-15.58", fader: 64, meter: [74, 88] }
];

const gainMarks = [["12", 25], ["6", 47], ["0", 66], ["5", 79], ["10", 91], ["20", 109], ["30", 123], ["60", 147], ["-∞", 165]];
const meterMarks = [["0", 6], ["6", 30], ["12", 50], ["18", 68], ["24", 84], ["30", 98], ["40", 117], ["60", 144], ["80", 161], ["-∞", 189]];

function scale(c) {
  const lit = c.selected ? "#5a6268" : "#68747d";
  let out = `<rect x="23" y="0" width="4" height="190" fill="#020304"/><rect x="40" y="0" width="8" height="190" fill="${c.selected ? "#62676b" : "#0c1014"}"/>`;
  gainMarks.forEach(([t, y]) => {
    out += `<text x="10" y="${y + 3}" text-anchor="end">${t}</text><path d="M11 ${y}H20M28 ${y}H37" stroke="${t === "0" ? "#b5bcc0" : lit}" stroke-width="${t === "0" ? 2 : 1}"/>`;
  });
  meterMarks.forEach(([t, y]) => {
    out += `<text x="57" y="${y + 3}" text-anchor="end" opacity=".7">${t}</text><path d="M41 ${y}H47" stroke="${t === "0" ? "#dde" : "#56616a"}" stroke-width="${t === "0" ? 2 : 1}"/>`;
  });
  [0, 1].forEach(k => {
    const x = 41 + k * 4;
    if (c.meter && c.meter[k]) out += `<rect x="${x}" y="${c.meter[k]}" width="3" height="${189 - c.meter[k]}" fill="#04c3e2"/>`;
    if (c.peak && c.peak[k]) out += `<rect x="${x}" y="${c.peak[k]}" width="3" height="1" fill="#04c3e2"/>`;
  });
  return `<svg>${out}</svg>`;
}

function panBox(p) {
  if (!p) return "C";
  const size = Math.abs(p);
  const label = (p < 0 ? "L" : "R") + size;
  const fill = `<div class="pan-fill" style="width:${size}%">${size === 100 ? label : ""}</div>`;
  const text = size === 100 ? "" : label;
  return p < 0
    ? `<div class="half left">${text}${fill}</div><div class="half"></div>`
    : `<div class="half"></div><div class="half right">${fill}${text}</div>`;
}

document.getElementById("strips").innerHTML = channels.map((c, i) => `
  <div class="strip${c.selected ? " selected" : ""}">
    <div class="pan">${panBox(c.pan)}</div>
    <div class="route">${icon("out")}1/2+<b></b><output>${c.db}</output></div>
    <div class="strip-main">
      <div class="controls">
        <div class="keys"><button>M</button><button>S</button></div>
        <div class="keys"><button class="${c.read ? "read" : ""}">R</button><button class="${c.write ? "write" : ""}">W</button></div>
        <div class="rounds">
          <button class="round"><em class="e">e</em></button>
          <button class="round" aria-label="Monitor">${icon("speaker")}</button>
          <button class="round" aria-label="Record enable"><span class="dot"></span></button>
        </div>
      </div>
      <div class="fader">${scale(c)}<input type="range" min="0" max="142" value="${c.fader}" aria-label="${c.name} volume"></div>
    </div>
    <div class="strip-name" style="background:${c.color}"><b>${i + 1}</b><span>${c.name}</span>${icon(c.icon)}</div>
  </div>`).join("");
```
